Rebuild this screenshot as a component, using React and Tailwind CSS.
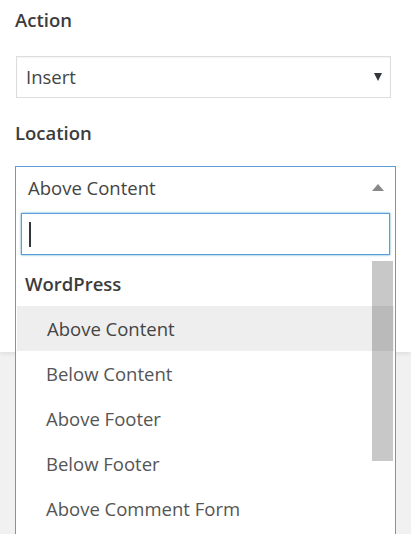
import React from "react";

const options = ["Above Content", "Below Content", "Above Footer", "Below Footer", "Above Comment Form"];

const App = () => {
  return (
    <div className="min-h-[534px] bg-[#f1f1f1] font-['Open_Sans',sans-serif] text-[18.5px] overflow-hidden">
      <div className="bg-white h-[352px] shadow-[0_2px_5px_rgba(0,0,0,0.08)] px-[15px] pt-[6px]">
        <div className="font-semibold text-[#3c3c3c] leading-[28px]">Action</div>
        <div className="mt-[22px] ml-[1px] w-[375px] h-[42px] border border-[#dddddd] shadow-[inset_0_1px_2px_rgba(0,0,0,0.05)] flex items-center justify-between pl-[9px] pr-[8px] text-[#444]">
          <span>Insert</span>
          <span className="w-0 h-0 border-l-[4px] border-r-[4px] border-t-[8px] border-l-transparent border-r-transparent border-t-[#32373c]" />
        </div>
        <div className="mt-[21px] font-semibold text-[#3c3c3c] leading-[28px]">Location</div>
        <div className="relative mt-[19px] w-[381px]">
          <div className="h-[42px] border border-b-0 border-[#5b9dd9] flex items-center justify-between pl-[12px] pr-[11px] text-[#444]">
            <span>Above Content</span>
            <span className="w-0 h-0 border-l-[6px] border-r-[6px] border-b-[7px] border-l-transparent border-r-transparent border-b-[#888]" />
          </div>
          <div className="absolute left-0 top-full w-[381px] bg-white border border-t-0 border-[#5b9dd9] h-[400px]">
            <div className="px-[5px] pt-[5px] pb-[7px]">
              <div className="h-[42px] border border-[#5b9dd9] shadow-[0_0_2px_rgba(30,140,190,0.8)] flex items-center pl-[7px]">
                <div className="w-[2px] h-[25px] bg-[#32373c]" />
              </div>
            </div>
            <div className="relative">
              <div className="h-[44px] flex items-center pl-[9px] font-semibold text-[#3c3c3c]">WordPress</div>
              {options.map((o, i) => (
                <div
                  key={o}
                  className={`h-[45px] flex items-center pl-[30px] ${i === 0 ? "bg-[#eeeeee] text-[#444] mx-[1px]" : "text-[#555]"}`}
                >
                  {o}
                </div>
              ))}
              <div className="absolute right-[2px] top-[-1px] w-[21px] h-[200px] bg-[rgba(0,0,0,0.216)]" />
            </div>
          </div>
        </div>
      </div>
    </div>
  );
};

export default App;
